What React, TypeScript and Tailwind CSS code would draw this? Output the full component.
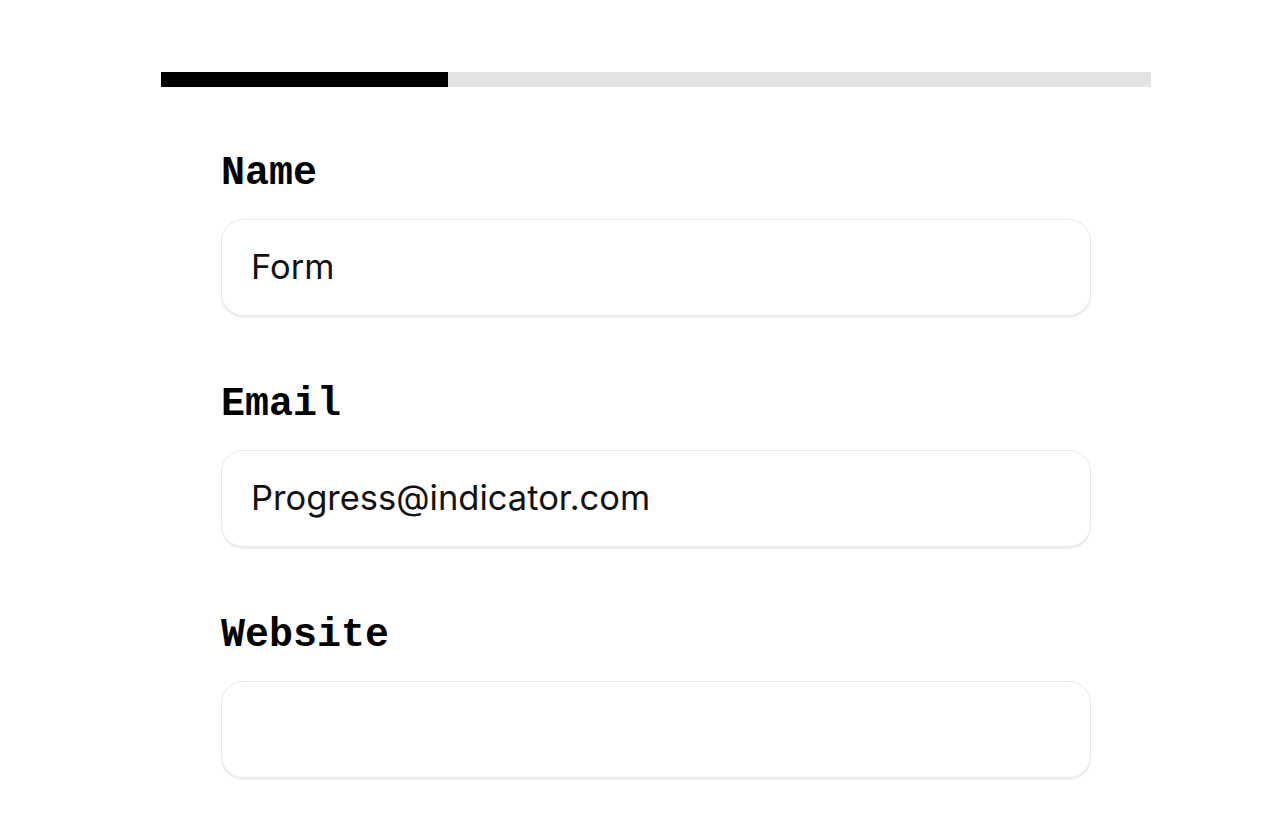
import React from "react";

function Field({ label, value }: { label: string; value: string }) {
  return (
    <div className="flex flex-col gap-[21px]">
      <label
        className="text-[40px] leading-[48px] font-bold text-black"
        style={{ fontFamily: '"Liberation Mono", "DejaVu Sans Mono", monospace' }}
      >
        {label}
      </label>
      <div className="h-[97px] rounded-[22px] border border-[#e9e9e9] bg-white shadow-[0_2px_1px_rgba(0,0,0,0.07)] flex items-center px-[29px]">
        <span
          className="text-[34.5px] text-[#111] leading-none"
          style={{ fontFamily: 'Inter, "Noto Sans", sans-serif' }}
        >
          {value}
        </span>
      </div>
    </div>
  );
}

export default function App() {
  return (
    <div className="min-h-[840px] w-[1278px] bg-white">
      <div className="ml-[161px] w-[990px] pt-[72px]">
        <div className="h-[15px] w-full bg-[#e3e3e3] flex">
          <div className="h-full w-[287px] bg-black" />
        </div>
        <div className="px-[60px] pt-[63px] flex flex-col gap-[65px]">
          <Field label="Name" value="Form" />
          <Field label="Email" value="Progress@indicator.com" />
          <Field label="Website" value="" />
        </div>
      </div>
    </div>
  );
}
